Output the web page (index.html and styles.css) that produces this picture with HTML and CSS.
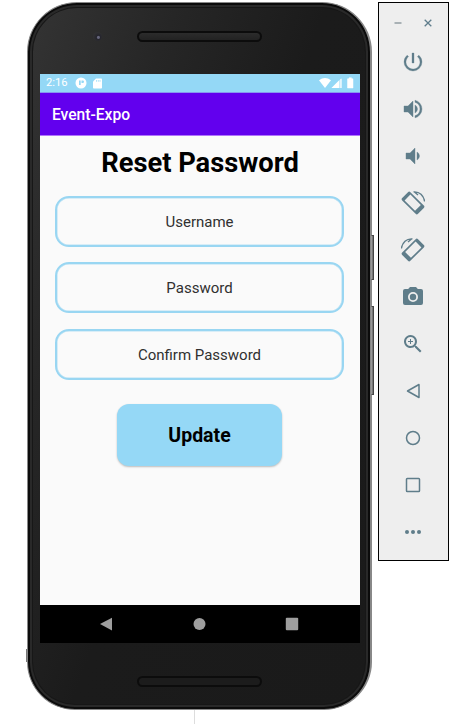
FILE: index.html
```html
<!DOCTYPE html>
<html lang="en">
<head>
<meta charset="utf-8">
<title>Event-Expo</title>
<link rel="stylesheet" href="styles.css">
</head>
<body>
<main class="stage">
  <section class="phone">
    <header class="bezel-top">
      <span class="camera"></span>
      <span class="speaker"></span>
    </header>
    <div class="screen">
      <div class="status">
        <span class="time">2:16</span>
        <svg class="st-app" viewBox="0 0 12 12"><circle cx="6" cy="6" r="5.5" fill="#fff"/><path d="M4 3.500h1.700V8H4zM6.500 3.500h1.300q1.200 0 1.200 1.200T7.800 6H6.500z" fill="#94d8f6"/></svg>
        <svg class="st-sd" viewBox="0 0 9 11"><path d="M3 .5h5.2q.8 0 .8.8v8.4q0 .8-.8.8H.8Q0 10.500 0 9.700V3.500z" fill="#fff"/><path d="M3.500 2v1.800M5.300 2v1.800M7 2v1.800" stroke="#94d8f6" stroke-width=".7"/></svg>
        <svg class="st-right" viewBox="0 0 36 12"><path d="M0 3.200Q6-1.200 12 3.200L6 11z" fill="#fff"/><path d="M22.500 1v10H12.500z" fill="#fff" opacity=".5"/><path d="M20 3.500V11h-7.500z" fill="#fff"/><path d="M22 2v9" stroke="#fff"/><path d="M28.500 1.800h1.500V.8h2.500v1h1.500V11h-5.500z" fill="#fff" stroke="#fff" stroke-width=".5"/></svg>
      </div>
      <div class="appbar">Event-Expo</div>
      <form class="content">
        <h1>Reset Password</h1>
        <div class="field">Username</div>
        <div class="field">Password</div>
        <div class="field">Confirm Password</div>
        <button type="button">Update</button>
      </form>
      <nav class="nav">
        <svg viewBox="0 0 14 14"><path d="M1 7 13 .8v12.700z"/></svg>
        <svg viewBox="0 0 14 14"><circle cx="7.500" cy="7" r="6"/></svg>
        <svg viewBox="0 0 14 14"><rect x=".8" y=".8" width="12.400" height="12.400" rx="1"/></svg>
      </nav>
    </div>
    <footer class="bezel-bottom"><span class="speaker"></span></footer>
    <span class="side power"></span>
    <span class="side volume"></span>
    <span class="side notch"></span>
  </section>
  <aside class="tools">
    <div class="window">
      <svg viewBox="0 0 10 10"><path d="M1.500 5h7" stroke="#8b979d" stroke-width="1.400"/></svg>
      <svg viewBox="0 0 10 10"><path d="M1.700 1.700l6.600 6.600M8.300 1.700l-6.600 6.600" stroke="#5f7d8c" stroke-width="1.300"/></svg>
    </div>
    <svg viewBox="0 0 24 24"><path d="M13 3h-2v10h2V3zm4.830 2.170-1.420 1.420A6.920 6.920 0 0 1 19 12a7 7 0 1 1-11.420-5.420L6.170 5.170A8.930 8.930 0 0 0 3 12a9 9 0 1 0 18 0 8.930 8.930 0 0 0-3.170-6.830z" stroke="#5f7d8a" stroke-width=".3"/></svg>
    <svg viewBox="0 0 24 24"><path d="M3 9v6h4l5 5V4L7 9H3zm13.500 3A4.500 4.500 0 0 0 14 7.970v8.050A4.480 4.480 0 0 0 16.500 12zM14 3.230v2.060a7 7 0 0 1 0 13.420v2.060a9 9 0 0 0 0-17.540z" stroke="#5f7d8a" stroke-width=".4"/></svg>
    <svg viewBox="0 0 24 24"><path d="M18.500 12A4.500 4.500 0 0 0 16 7.970v8.050A4.480 4.480 0 0 0 18.500 12zM5 9v6h4l5 5V4L9 9H5z" stroke="#5f7d8a" stroke-width=".4"/></svg>
    <svg viewBox="0 0 24 24"><g transform="rotate(45 12 12)"><path fill-rule="evenodd" d="M2.500 6.200h19q1.700 0 1.700 1.700v8.200q0 1.700-1.700 1.700h-19q-1.700 0-1.700-1.700V7.900q0-1.700 1.700-1.700zm1.700 1.700v8.200h14.800V7.900z"/></g><path d="M12.500.9C18.500.3 22.800 4.500 23.600 10.500M13.500 1l3.500 3" class="line"/></svg>
    <svg viewBox="0 0 24 24"><g transform="matrix(-1 0 0 1 24 0)"><g transform="rotate(45 12 12)"><path fill-rule="evenodd" d="M2.500 6.200h19q1.700 0 1.700 1.700v8.200q0 1.700-1.700 1.700h-19q-1.700 0-1.700-1.700V7.900q0-1.700 1.700-1.700zm1.700 1.700v8.200h14.800V7.900z"/></g><path d="M12.500.9C18.500.3 22.800 4.500 23.600 10.500M13.500 1l3.500 3" class="line"/></g></svg>
    <svg viewBox="0 0 24 24"><path fill-rule="evenodd" d="M9 2 7.170 4H4a2 2 0 0 0-2 2v12a2 2 0 0 0 2 2h16a2 2 0 0 0 2-2V6a2 2 0 0 0-2-2h-3.170L15 2H9zm3 15a5 5 0 1 1 0-10 5 5 0 0 1 0 10z"/><circle cx="12" cy="12" r="3.200"/></svg>
    <svg viewBox="0 0 24 24"><path d="M15.500 14h-.79l-.28-.27A6.500 6.500 0 1 0 13.730 14.430l.27.28v.79l5 4.990L20.490 19l-4.990-5zm-6 0a4.500 4.500 0 1 1 0-9 4.500 4.500 0 0 1 0 9zM12 10h-2v2H9v-2H7V9h2V7h1v2h2v1z"/></svg>
    <svg viewBox="0 0 24 24"><path class="outline" d="M6.500 12 18 5.500v13z"/></svg>
    <svg viewBox="0 0 24 24"><circle class="outline" cx="12" cy="12" r="6.500"/></svg>
    <svg viewBox="0 0 24 24"><rect class="outline" x="5.500" y="5.500" width="13" height="13" rx=".8"/></svg>
    <svg viewBox="0 0 24 24"><circle cx="6" cy="12" r="2"/><circle cx="12" cy="12" r="2"/><circle cx="18" cy="12" r="2"/></svg>
  </aside>
</main>
</body>
</html>
```

FILE: styles.css
```css
* { box-sizing: border-box; }
body {
  margin: 0;
  background: #fff;
  font-family: Roboto, "Liberation Sans", sans-serif;
}
svg { display: block; flex: none; }
.stage {
  display: flex;
  align-items: flex-start;
  gap: 6px;
  width: 466px;
  height: 724px;
  padding: 2px 0 0 27px;
  overflow: hidden;
  background: linear-gradient(#ddd, #ddd) 194px 709px / 1px 15px no-repeat;
}
.phone {
  position: relative;
  display: flex;
  flex-direction: column;
  width: 345px;
  height: 708px;
  padding: 0 11px;
  border: 1px solid #888;
  border-width: 1px 2px 1px 1px;
  border-radius: 50px 50px 48px 48px;
  background: linear-gradient(110deg, #343434 0, #262626 25%, #1b1b1b 50%, #1a1a1a 100%);
  box-shadow: inset 0 0 0 2px #0b0b0b, inset 0 0 0 4px #292929, inset 0 0 0 5px #171717;
}
.bezel-top {
  position: relative;
  display: flex;
  justify-content: center;
  height: 71px;
  padding: 28px 0 0 0;
}
.camera {
  position: absolute;
  left: 54px;
  top: 29px;
  width: 9px;
  height: 9px;
  border-radius: 50%;
  background: radial-gradient(circle at 60% 60%, #66667c 0 1px, #25252d 2px, #303032 5px);
}
.speaker {
  width: 125px;
  height: 11px;
  border: 2px solid #0c0c0c;
  border-radius: 6px;
  background: linear-gradient(#2c2c2c, #222);
}
.bezel-bottom .speaker { background: #1c1c1c; }
.screen {
  display: flex;
  flex-direction: column;
  width: 320px;
  height: 569px;
  margin-left: 1px;
}
.status {
  display: flex;
  align-items: center;
  height: 19px;
  padding: 0 6px;
  background: #94d8f6;
  border-bottom: 1px solid #8797f0;
}
.time { width: 29px; color: #fff; font-size: 11.200px; line-height: 18px; }
.st-app { width: 12px; height: 12px; }
.st-sd { width: 9px; height: 11px; margin-left: 6px; }
.st-right { width: 36px; height: 12px; margin-left: auto; margin-right: -1px; }
.appbar {
  height: 43px;
  padding-left: 12px;
  background: #6200ee;
  border-bottom: 1px solid #b074fa;
  color: #fff;
  font-size: 15.600px;
  font-weight: 500;
  line-height: 44px;
}
.content {
  display: flex;
  flex-direction: column;
  align-items: center;
  height: 469px;
  background: #fafafa;
}
h1 {
  margin: 10px 0 14.500px;
  color: #000;
  font-size: 27.300px;
  font-weight: 700;
  line-height: 35px;
  white-space: nowrap;
}
.field {
  width: 289px;
  height: 51px;
  margin: 0 0 15.700px -1px;
  border: 2px solid #99d6f2;
  border-radius: 14px;
  box-shadow: inset 0 0 0 .5px #b5dff3;
  color: #303030;
  font-size: 15px;
  line-height: 49px;
  text-align: center;
}
button {
  width: 165px;
  height: 62px;
  margin: 8px 0 0 -1px;
  padding: 0;
  border: 0;
  border-radius: 12px;
  background: #95d8f6;
  box-shadow: 0 1px 2px #bbb;
  color: #000;
  font: 700 19.500px/63px Roboto, sans-serif;
}
.nav {
  display: flex;
  align-items: center;
  justify-content: space-between;
  height: 38px;
  padding: 0 61px 0 59px;
  background: #000;
}
.nav svg { width: 14px; height: 14px; fill: #9e9e9e; }
.bezel-bottom {
  display: flex;
  justify-content: center;
  padding-top: 33px;
}
.side {
  position: absolute;
  right: -4px;
  width: 3px;
  border: 1px solid #444;
  border-left-color: #999;
  background: #777;
}
.side.power { top: 232px; height: 45px; }
.side.volume { top: 303px; height: 89px; }
.side.notch { left: -2px; right: auto; top: 646px; width: 1px; height: 13px; border: 0; }
.tools {
  display: flex;
  flex-direction: column;
  align-items: center;
  gap: 23px;
  width: 71px;
  height: 559px;
  padding-right: 2px;
  border: 1px solid #000;
  background: #eee;
}
.tools > svg { width: 24px; height: 24px; fill: #5f7d8a; }
.window { display: flex; gap: 20px; height: 24px; padding-top: 15px; }
.window svg { width: 10px; height: 10px; }
.tools .line { fill: none; stroke: #5f7d8a; stroke-width: 1.400; }
.tools .outline { fill: none; stroke: #5f7d8a; stroke-width: 1.500; stroke-linejoin: round; }
```
